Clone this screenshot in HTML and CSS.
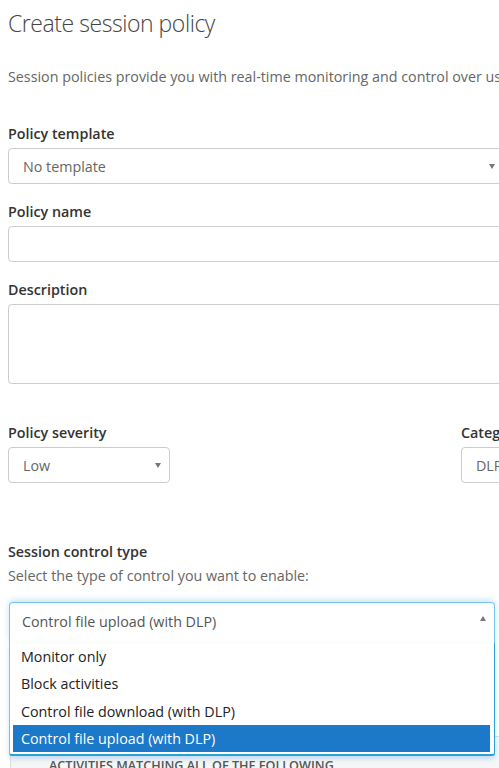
FILE: index.html
```html
<!DOCTYPE html>
<html>
<head>
<meta charset="utf-8">
<link rel="stylesheet" href="styles.css">
</head>
<body>
<div class="page">
  <h1 class="title">Create session policy</h1>
  <p class="intro">Session policies provide you with real-time monitoring and control over user activities in your cloud apps.</p>

  <div class="group g-template">
    <div class="label">Policy template</div>
    <div class="select wide"><span>No template</span><span class="caret"></span></div>
  </div>

  <div class="group g-name">
    <div class="label">Policy name</div>
    <div class="input wide"></div>
  </div>

  <div class="group g-desc">
    <div class="label">Description</div>
    <div class="textarea wide"></div>
  </div>

  <div class="row g-sev">
    <div class="group">
      <div class="label">Policy severity</div>
      <div class="select sev"><span>Low</span><span class="caret"></span></div>
    </div>
    <div class="group cat">
      <div class="label">Category</div>
      <div class="select catsel"><span>DLP</span><span class="caret"></span></div>
    </div>
  </div>

  <div class="group g-session">
    <div class="label">Session control type</div>
    <div class="hint">Select the type of control you want to enable:</div>
    <div class="combo">
      <div class="combo-head"><span>Control file upload (with DLP)</span><span class="caret up"></span></div>
      <ul class="combo-list">
        <li>Monitor only</li>
        <li>Block activities</li>
        <li>Control file download (with DLP)</li>
        <li class="active">Control file upload (with DLP)</li>
      </ul>
    </div>
  </div>

  <div class="panel">
    <div class="panel-head">ACTIVITIES MATCHING ALL OF THE FOLLOWING</div>
  </div>
</div>
</body>
</html>
```

FILE: styles.css
```css
html, body {
  margin: 0;
  padding: 0;
  overflow: hidden;
  background: #fff;
}
body {
  font-family: "Open Sans", "Noto Sans", sans-serif;
  font-size: 14.3px;
  color: #333;
}
.page {
  width: 540px;
  padding: 7px 0 0 8px;
}
.title {
  margin: 0;
  font-size: 23px;
  letter-spacing: -0.45px;
  line-height: 32px;
  font-weight: 300;
  color: #444;
}
.intro {
  margin: 28px 0 0;
  line-height: 20px;
  color: #666;
  white-space: nowrap;
}
.label {
  font-weight: 600;
  line-height: 20px;
  color: #333;
  margin-bottom: 4px;
  white-space: nowrap;
}
.g-template { margin-top: 37px; }
.g-name { margin-top: 18px; }
.g-desc { margin-top: 18px; }
.g-sev { margin-top: 39px; }
.g-session { margin-top: 59px; }
.row {
  display: flex;
  gap: 291px;
}
.select, .input, .textarea {
  box-sizing: border-box;
  height: 36px;
  border: 1px solid #ccc;
  border-radius: 4px;
  background: #fff;
  color: #666;
  display: flex;
  align-items: center;
  padding: 0 14px;
  position: relative;
}
.wide { width: 530px; }
.textarea { height: 80px; }
.sev { width: 162px; }
.catsel { width: 100px; }
.caret {
  position: absolute;
  top: 15px;
  width: 0;
  height: 0;
  border-left: 3.5px solid transparent;
  border-right: 3.5px solid transparent;
  border-top: 5px solid #777;
}
.wide .caret { left: 480px; }
.sev .caret { right: 8px; }
.catsel .caret { right: 8px; }
.hint {
  color: #666;
  line-height: 20px;
  margin-top: 4px;
  white-space: nowrap;
}
.combo {
  position: relative;
  margin-top: 16px;
  width: 486px;
  margin-left: 1px;
  z-index: 2;
}
.combo-head {
  box-sizing: border-box;
  height: 41px;
  border: 1px solid #72c6ea;
  border-bottom: none;
  border-radius: 4px 4px 0 0;
  padding: 9px 12px 0;
  line-height: 20px;
  color: #555;
  position: relative;
  background: #fff;
  box-shadow: 0 -2px 6px rgba(102, 175, 233, 0.35);
}
.caret.up {
  top: 13px;
  right: 8px;
  border-top: none;
  border-bottom: 5px solid #777;
}
.combo-list {
  position: absolute;
  top: 41px;
  left: 0;
  right: 0;
  margin: 0;
  padding: 0 4px 2px 3px;
  list-style: none;
  background: #fff;
  border: 1px solid #72c6ea;
  border-top: none;
  border-right-color: #2aa0d6;
  border-bottom: 2px solid #2aa0d6;
  border-radius: 0 0 3px 3px;
  box-shadow: 0 3px 5px rgba(102, 175, 233, 0.35);
}
.combo-list li {
  height: 27.33px;
  line-height: 27px;
  padding-left: 8px;
  color: #222;
  white-space: nowrap;
}
.combo-list li.active {
  background: #1c78c8;
  color: #fff;
}
.panel {
  margin-top: 93px;
  margin-left: 2px;
  border: 1px solid #ddd;
  background: #f6f6f6;
  height: 60px;
}
.panel-head {
  padding: 20px 0 0 38px;
  font-size: 12.6px;
  font-weight: 600;
  color: #555;
  line-height: 18px;
  white-space: nowrap;
}
```
